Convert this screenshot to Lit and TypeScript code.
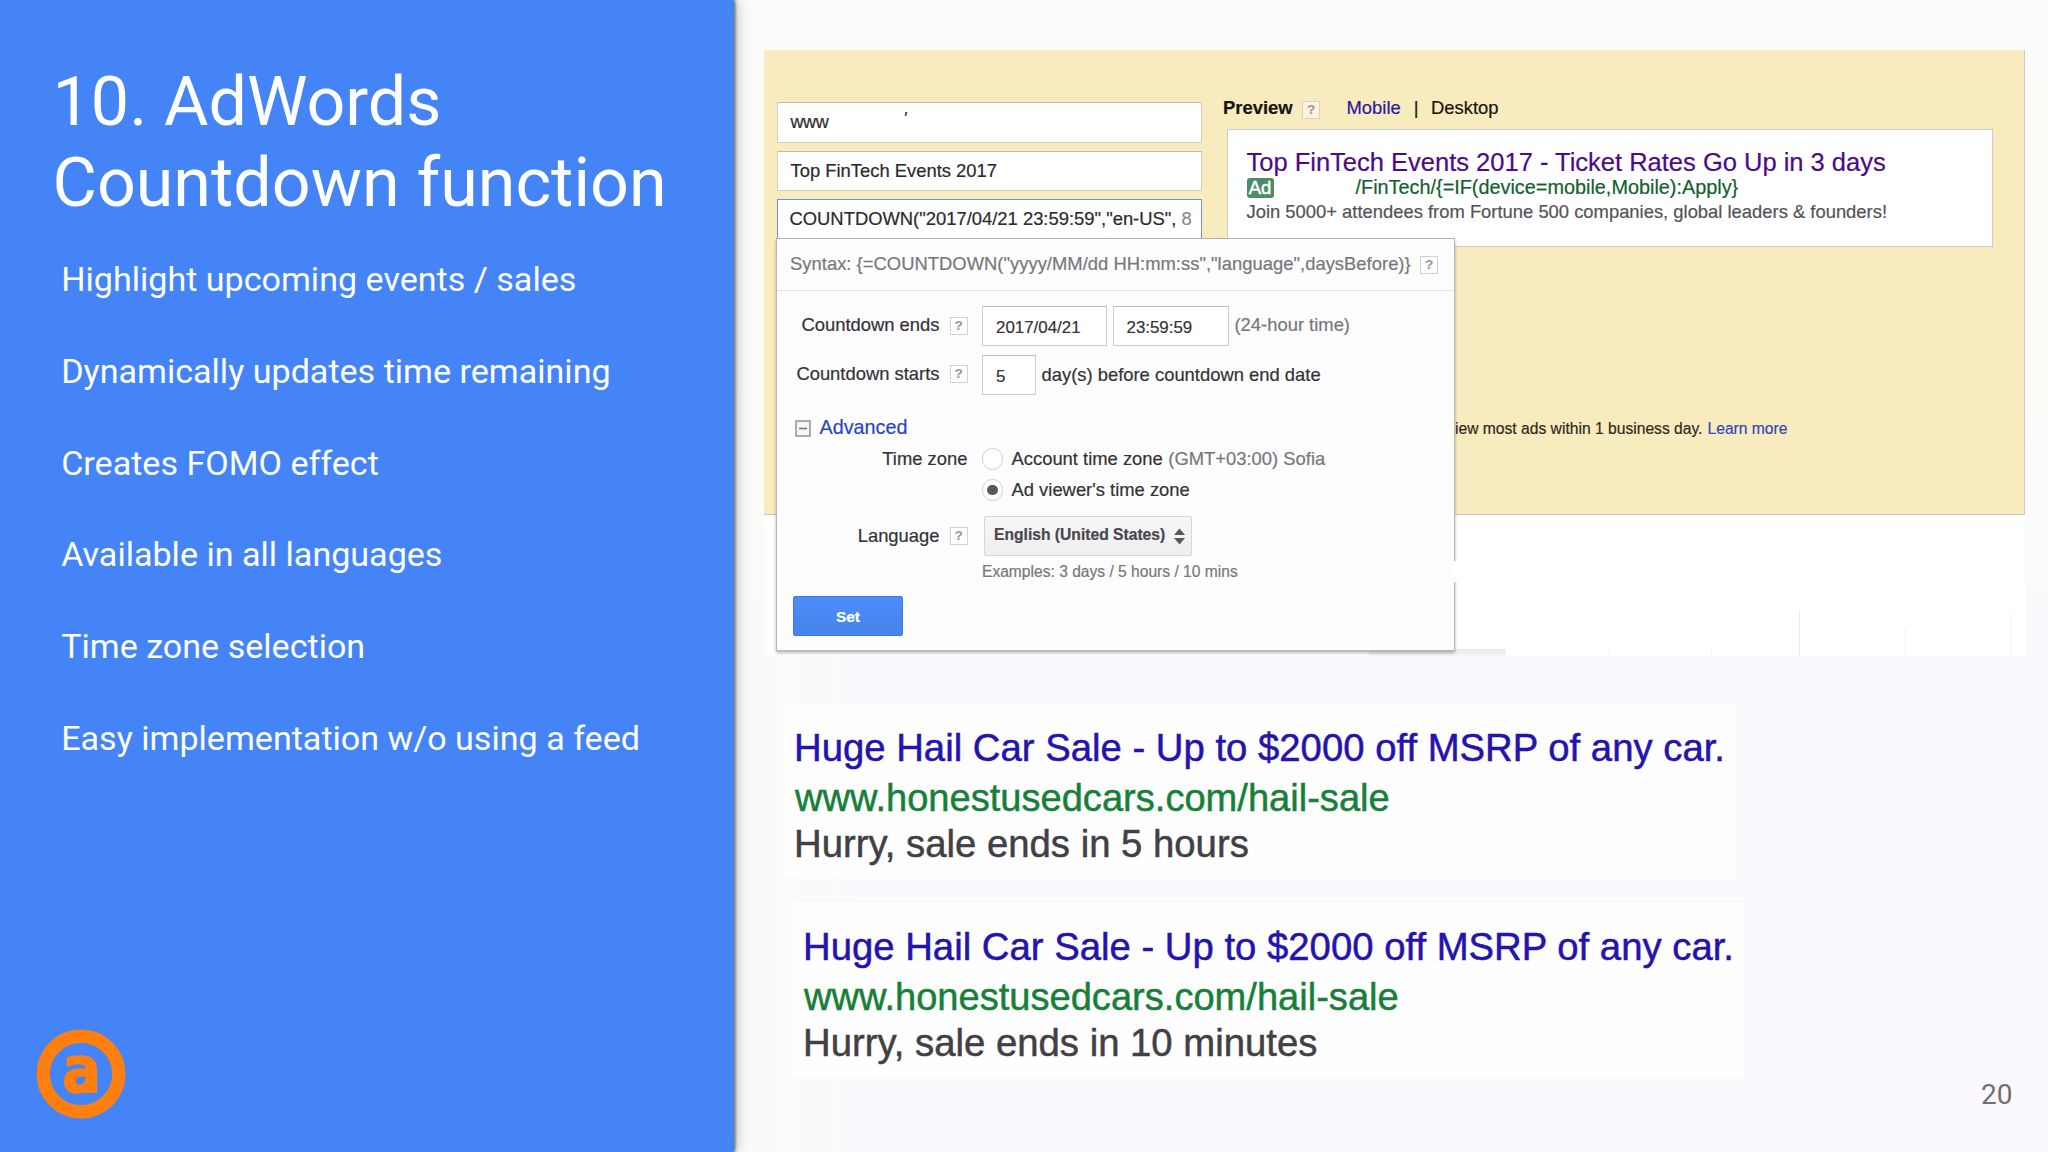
import { LitElement, html, css } from "lit";
import { customElement, property } from "lit/decorators.js";
import { classMap } from "lit/directives/class-map.js";

@customElement("help-mark")
class HelpMark extends LitElement {
  static styles = css`
    :host { display: block; flex: none; }
    .box { width: 18px; height: 18px; box-sizing: border-box; border: 1px solid #d3d2d6; background: rgba(255, 255, 255, 0.45); color: #9c9ba3; font: bold 13.5px/16px "Liberation Sans", Arial, sans-serif; text-align: center; }
  `;
  render() { return html`<div class="box">?</div>`; }
}

@customElement("side-panel")
class SidePanel extends LitElement {
  static styles = css`
    :host { display: flex; }
    .panel { width: 734px; height: 1152px; box-sizing: border-box; padding: 62px 0 33.5px 52.5px; display: flex; flex-direction: column; background: #4484f6; color: #fcfeff; font-family: Roboto, sans-serif; box-shadow: 1px 0 3px rgba(0, 0, 0, 0.6), 3px 0 12px rgba(0, 0, 0, 0.25); }
    .title { margin: 0; font-weight: 400; font-size: 68.2px; line-height: 80.7px; }
    .list { list-style: none; margin: 10.7px 0 0 8.7px; padding: 0; }
    .item { font-size: 34.1px; line-height: 91.7px; }
    .logo { display: block; width: 90px; height: 90px; margin: auto 0 0 -16.5px; }
    .letter { font: bold 63.8px "DejaVu Sans Condensed", "DejaVu Sans", sans-serif; fill: #ff7f11; stroke: #ff7f11; stroke-width: 1.4; stroke-linejoin: round; }
  `;
  private points = [
    "Highlight upcoming events / sales",
    "Dynamically updates time remaining",
    "Creates FOMO effect",
    "Available in all languages",
    "Time zone selection",
    "Easy implementation w/o using a feed",
  ];
  render() {
    return html`<div class="panel">
      <h1 class="title">10. AdWords<br />Countdown function</h1>
      <ul class="list">${this.points.map((p) => html`<li class="item">${p}</li>`)}</ul>
      <svg class="logo" viewBox="0 0 90 90">
        <circle cx="45" cy="45" r="37.8" fill="none" stroke="#ff7f11" stroke-width="13.4" />
        <text class="letter" x="26.2" y="62.8">a</text>
        <rect x="38" y="58" width="23" height="5.8" rx="2.5" fill="#ff7f11" />
      </svg>
    </div>`;
  }
}

@customElement("countdown-popup")
class CountdownPopup extends LitElement {
  static styles = css`
    :host { display: block; font-family: "Liberation Sans", Arial, sans-serif; font-size: 18.4px; color: #333236; -webkit-text-stroke: 0.2px; }
    .popup { width: 679px; height: 412.5px; box-sizing: border-box; border: 1px solid #b9b8bc; border-top: 1.5px solid #b5b4b4; background: #fefdfe; box-shadow: 0 2px 3px rgba(0, 0, 0, 0.28); white-space: nowrap; position: relative; }
    .gap { position: absolute; right: -3px; top: 322px; width: 4px; height: 21px; background: #fff; }
    .syntax { height: 50.5px; display: flex; align-items: center; padding-left: 13px; border-bottom: 1px solid #e2e1e5; color: #78777b; gap: 9.5px; letter-spacing: 0.02px; }
    .syntax help-mark { margin-top: 2px; }
    .form { padding-top: 15px; }
    .row { display: flex; align-items: center; }
    .r2 { margin-top: 8.5px; }
    .lab { width: 190.5px; display: flex; justify-content: flex-end; align-items: center; gap: 10px; margin-right: 14.5px; }
    .up { padding-bottom: 1px; }
    .up2 { padding-bottom: 2px; }
    .in { box-sizing: border-box; height: 40.5px; border: 1px solid #cdccd0; border-top-color: #bbbabf; padding-left: 13px; font-size: 16.9px; line-height: 41px; background: #fff; }
    .date { width: 124.5px; margin-right: 6px; }
    .time { width: 116px; margin-right: 6px; }
    .days { width: 53.5px; margin-right: 6px; }
    .note { color: #78777b; }
    .adv { margin: 20.5px 0 4px 17.5px; height: 24px; display: flex; align-items: center; color: #2a47b8; font-size: 19.8px; }
    .minus { width: 16px; height: 17px; margin: 2px 9px 0 0; }
    .opt { height: 31px; }
    .radio { box-sizing: border-box; width: 21.5px; height: 21.5px; border: 1.5px solid #cfced4; border-radius: 50%; background: #fff; display: grid; place-items: center; margin: 0 8.5px 0 -0.5px; }
    .dot { width: 10.5px; height: 10.5px; border-radius: 50%; background: #58575b; }
    .note-zone { margin-left: 5.5px; }
    .lang { margin-top: 10px; }
    .select { box-sizing: border-box; width: 207.5px; height: 40px; margin-left: 2px; border: 1px solid #d6d5d9; border-radius: 2px; background: linear-gradient(#f7f7f8, #eeedf0); display: flex; align-items: center; justify-content: space-between; padding: 0 6px 1px 9px; font-weight: bold; font-size: 15.65px; color: #48474b; }
    .arrows { width: 11px; height: 17px; margin-top: 3px; }
    .ex { margin: 6.5px 0 0 205px; font-size: 15.6px; line-height: 20px; color: #78777b; }
    .set { box-sizing: border-box; margin: 13.5px 0 0 16px; width: 110px; height: 40px; border: 1px solid #3a78e4; border-radius: 2px; background: linear-gradient(#4c8dfb, #4584ec); color: #fff; font-weight: bold; font-size: 15.4px; line-height: 39px; text-align: center; }
  `;
  render() {
    return html`<div class="popup">
      <div class="syntax"><span>Syntax: {=COUNTDOWN("yyyy/MM/dd HH:mm:ss","language",daysBefore)}</span><help-mark></help-mark></div>
      <div class="form">
        <div class="row">
          <div class="lab"><span class="up">Countdown ends</span><help-mark></help-mark></div>
          <div class="in date">2017/04/21</div><div class="in time">23:59:59</div><span class="note up">(24-hour time)</span>
        </div>
        <div class="row r2">
          <div class="lab up2"><span>Countdown starts</span><help-mark></help-mark></div>
          <div class="in days">5</div><span>day(s) before countdown end date</span>
        </div>
        <div class="adv">
          <svg class="minus" viewBox="0 0 16 17"><rect x="1" y="1" width="14" height="15" fill="#f6f6f8" stroke="#98979b" stroke-width="1.6" /><path d="M4 8.5H12" stroke="#77767a" stroke-width="1.6" /></svg>
          <span>Advanced</span>
        </div>
        <div class="row opt">
          <div class="lab">Time zone</div><div class="radio"></div><span>Account time zone</span><span class="note note-zone">(GMT+03:00) Sofia</span>
        </div>
        <div class="row opt">
          <div class="lab"></div><div class="radio"><div class="dot"></div></div><span>Ad viewer's time zone</span>
        </div>
        <div class="row lang">
          <div class="lab"><span>Language</span><help-mark></help-mark></div>
          <div class="select"><span>English (United States)</span>
            <svg class="arrows" viewBox="0 0 11 17"><path d="M0 7L5.5 0.5L11 7ZM0 10L5.5 16.5L11 10Z" fill="#58575b" /></svg>
          </div>
        </div>
        <div class="ex">Examples: 3 days / 5 hours / 10 mins</div>
        <div class="set">Set</div>
      </div>
      <div class="gap"></div>
    </div>`;
  }
}

@customElement("ads-editor")
class AdsEditor extends LitElement {
  static styles = css`
    :host { display: block; font-family: "Liberation Sans", Arial, sans-serif; font-size: 18.4px; color: #2b2a2c; -webkit-text-stroke: 0.2px; }
    .shot { position: relative; width: 1261px; height: 606.5px; white-space: nowrap; display: flex; flex-direction: column; }
    .editor { box-sizing: border-box; height: 465.5px; background: #f8ebbe; border-right: 1.5px solid #cdcbc6; border-bottom: 1.5px solid #c8c6c2; display: flex; }
    .fields { width: 425px; padding: 52px 0 0 13px; display: flex; flex-direction: column; gap: 8px; }
    .field { box-sizing: border-box; height: 41px; border: 1px solid #d2cfc6; border-top-color: #bdbbb4; background: #fff; padding-left: 12.5px; display: flex; align-items: center; }
    .short { height: 40px; }
    .focus { border: 1.5px solid #6f93c4; padding-left: 11.5px; }
    .www { letter-spacing: -0.4px; font-size: 18px; }
    .tick { margin: -7px 0 0 75px; font-style: italic; font-size: 17px; }
    .count { color: #8b8a8c; margin-left: 5px; }
    .preview { padding: 44.5px 0 0 21px; }
    .tabs { height: 34.5px; line-height: 28px; display: flex; color: #17150f; }
    .ptitle { font-weight: bold; }
    .tabs help-mark { margin: 6.5px 26.5px 0 9.5px; }
    .mobile { color: #2a1ba0; }
    .bar { margin: 0 12.5px 0 13px; }
    .card { box-sizing: border-box; margin-left: 3.5px; width: 766px; height: 118px; border: 1px solid #cfccc4; background: #fff; padding: 17px 0 0 19px; }
    .headline { font-size: 25.5px; line-height: 30px; color: #4c0a8a; }
    .line { display: flex; align-items: center; height: 22px; }
    .ad { width: 27px; height: 20px; border-radius: 3px; background: #4d8a66; color: #fff; font-size: 18.5px; line-height: 20px; text-align: center; -webkit-text-stroke: 0.5px; }
    .url { margin-left: 82px; font-size: 19.85px; color: #11602f; }
    .desc { line-height: 25px; color: #545357; }
    .notice { margin: 172px 0 0 232px; font-size: 15.65px; line-height: 20px; color: #2f2a1c; }
    .learn { color: #3347b5; margin-left: 5px; }
    .rest { flex: 1; background: #fff; position: relative; display: flex; align-items: flex-end; }
    .rule { position: absolute; bottom: 0; width: 1px; background: #f4f2f7; }
    .r1 { left: 845px; height: 9px; } .r2 { left: 947px; height: 9px; } .r3 { left: 1035px; height: 46px; background: #ebe9f0; } .r4 { left: 1141px; height: 28px; } .r5 { left: 1246px; height: 42px; }
    .foot { width: 137px; margin-left: 605px; height: 7px; background: linear-gradient(#ebe9ed, #f7f5f9); }
    .pop { position: absolute; left: 12px; top: 188.5px; }
  `;
  render() {
    return html`<div class="shot">
      <div class="editor">
        <div class="fields">
          <div class="field"><span class="www">www</span><span class="tick">'</span></div>
          <div class="field short">Top FinTech Events 2017</div>
          <div class="field focus"><span>COUNTDOWN("2017/04/21 23:59:59","en-US",</span><span class="count">8</span></div>
        </div>
        <div class="preview">
          <div class="tabs"><span class="ptitle">Preview</span><help-mark></help-mark><span class="mobile">Mobile</span><span class="bar">|</span><span>Desktop</span></div>
          <div class="card">
            <div class="headline">Top FinTech Events 2017 - Ticket Rates Go Up in 3 days</div>
            <div class="line"><span class="ad">Ad</span><span class="url">/FinTech/{=IF(device=mobile,Mobile):Apply}</span></div>
            <div class="desc">Join 5000+ attendees from Fortune 500 companies, global leaders &amp; founders!</div>
          </div>
          <div class="notice">iew most ads within 1 business day.<span class="learn">Learn more</span></div>
        </div>
      </div>
      <div class="rest"><div class="foot"></div>${[1, 2, 3, 4, 5].map((n) => html`<div class=${classMap({ rule: true, ["r" + n]: true })}></div>`)}</div>
      <countdown-popup class="pop"></countdown-popup>
    </div>`;
  }
}

@customElement("search-ad")
class SearchAd extends LitElement {
  @property() text = "";
  static styles = css`
    :host { display: block; }
    .ad { box-sizing: border-box; width: 952px; height: 175px; background: #fefefe; padding: 22px 0 0 10px; font-family: "Liberation Sans", Arial, sans-serif; font-size: 38.3px; white-space: nowrap; -webkit-text-stroke: 0.5px; }
    .headline { line-height: 44px; color: #2413ae; height: 50px; box-sizing: border-box; }
    .url { line-height: 45px; height: 45px; color: #168038; font-size: 38.1px; padding-left: 1px; }
    .text { line-height: 45px; color: #414044; }
  `;
  render() {
    return html`<div class="ad"><div class="headline">Huge Hail Car Sale - Up to $2000 off MSRP of any car.</div><div class="url">www.honestusedcars.com/hail-sale</div><div class="text">${this.text}</div></div>`;
  }
}

@customElement("app-root")
class AppRoot extends LitElement {
  static styles = css`
    :host { display: block; }
    .slide { width: 2048px; height: 1152px; display: flex; overflow: hidden; background: linear-gradient(to right, #f9fcf9 740px, rgba(249, 252, 249, 0) 860px), linear-gradient(#fcfdfb 0, #fcfcfb 400px, #fbf9fd 640px); }
    .side { position: relative; z-index: 1; }
    .stage { flex: 1; box-sizing: border-box; padding: 49.5px 0 0 30px; display: flex; flex-direction: column; }
    .first { margin: 48px 0 0 20px; }
    .second { margin: 24px 0 0 29px; }
    .page { margin: 0 35.5px 0 0; align-self: flex-end; font: 28px/33px Roboto, sans-serif; color: #707074; }
  `;
  render() {
    return html`<div class="slide">
      <side-panel class="side"></side-panel>
      <div class="stage">
        <ads-editor></ads-editor>
        <search-ad class="first" text="Hurry, sale ends in 5 hours"></search-ad>
        <search-ad class="second" text="Hurry, sale ends in 10 minutes"></search-ad>
        <div class="page">20</div>
      </div>
    </div>`;
  }
}
